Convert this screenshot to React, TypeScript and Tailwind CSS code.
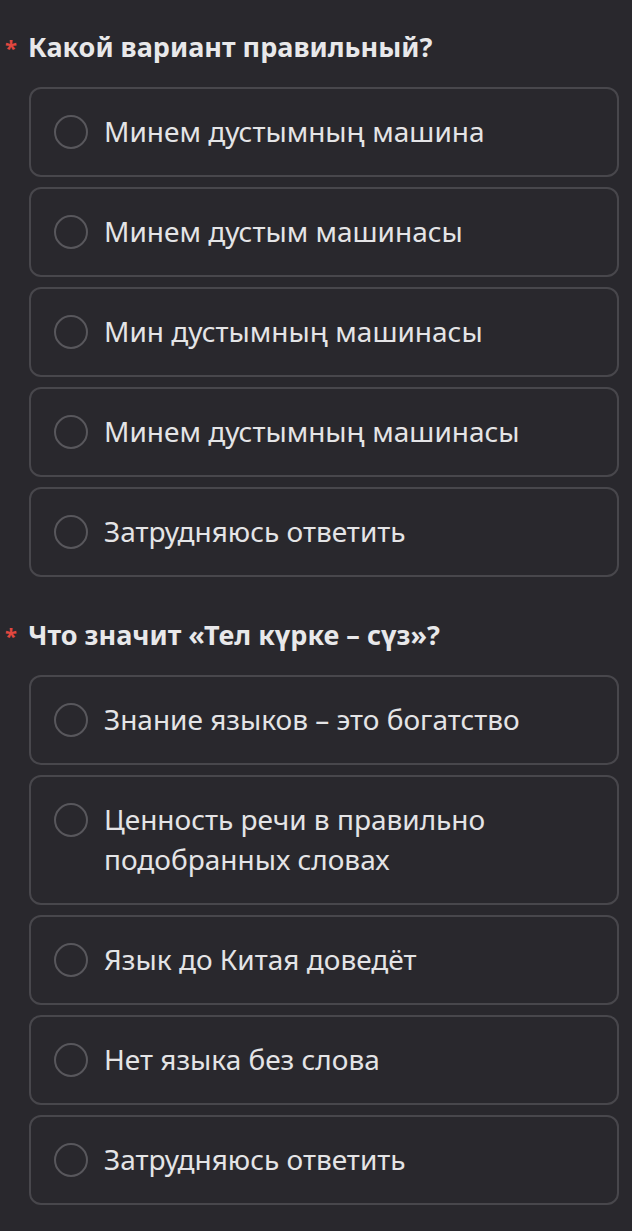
import React from 'react';

interface Question {
  title: string;
  options: string[];
}

const questions: Question[] = [
  {
    title: 'Какой вариант правильный?',
    options: [
      'Минем дустымның машина',
      'Минем дустым машинасы',
      'Мин дустымның машинасы',
      'Минем дустымның машинасы',
      'Затрудняюсь ответить',
    ],
  },
  {
    title: 'Что значит «Тел күрке – сүз»?',
    options: [
      'Знание языков – это богатство',
      'Ценность речи в правильно подобранных словах',
      'Язык до Китая доведёт',
      'Нет языка без слова',
      'Затрудняюсь ответить',
    ],
  },
];

function Option({ label }: { label: string }) {
  return (
    <label className="flex items-start gap-[16px] rounded-[12px] border-2 border-[#48474c] pl-[23px] pr-[24px] pt-[22px] pb-[24px] cursor-pointer">
      <span className="mt-[4px] h-[34px] w-[34px] shrink-0 rounded-full border-2 border-[#58575c]" />
      <span className="text-[28px] leading-[40px] text-[#e4e4e6]">{label}</span>
    </label>
  );
}

export default function App() {
  return (
    <div
      className="min-h-[1231px] w-full bg-[#29282d] pt-[28px]"
      style={{ fontFamily: '"Noto Sans", "Open Sans", sans-serif' }}
    >
      {questions.map((q) => (
        <section key={q.title} className="mb-[39px]">
          <h2 className="flex items-start text-[27px] font-bold leading-[38px] text-[#e8e8ea]">
            <span className="w-[28px] pr-[6px] text-center text-[22px] text-[#e2473f]">*</span>
            {q.title}
          </h2>
          <div className="mt-[21px] ml-[29px] mr-[13px] flex flex-col gap-[10px]">
            {q.options.map((o) => (
              <Option key={o} label={o} />
            ))}
          </div>
        </section>
      ))}
    </div>
  );
}
